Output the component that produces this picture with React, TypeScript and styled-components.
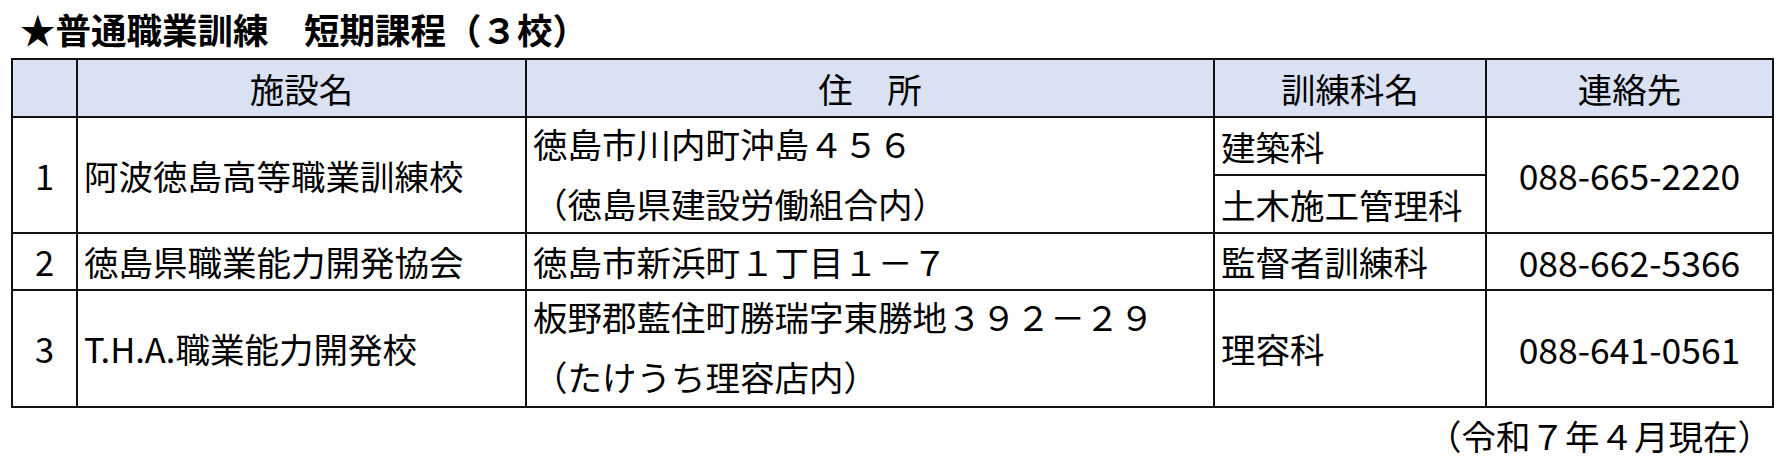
import React from "react";
import styled, { createGlobalStyle } from "styled-components";

const Global = createGlobalStyle`
  html, body { margin: 0; padding: 0; background: #ffffff; }
  body { font-family: "Noto Sans CJK JP", "Noto Sans", sans-serif; color: #000; }
`;

const Page = styled.div`
  width: 1761px;
  padding-left: 11px;
`;

const Title = styled.h1`
  margin: 0;
  height: 58px;
  display: flex;
  align-items: center;
  padding-left: 9px;
  font-size: 35.5px;
  font-weight: 700;
  line-height: 1;
`;

const Table = styled.table`
  width: 1761px;
  border-collapse: collapse;
  table-layout: fixed;
  font-size: 34.5px;
  font-weight: 400;
`;

const HeadRow = styled.tr`
  height: 58px;
  background: #d9e1f2;
`;

const HeadCell = styled.th`
  border: 2px solid #111;
  font-weight: 400;
  text-align: center;
  padding: 0;
  line-height: 1;
`;

const Row = styled.tr<{ $h: number }>`
  height: ${(p) => p.$h}px;
`;

const Cell = styled.td<{ $align?: "left" | "center" }>`
  border: 2px solid #111;
  padding: 0 6px;
  text-align: ${(p) => p.$align ?? "left"};
  vertical-align: middle;
  line-height: 1;
  white-space: nowrap;
`;

const Lines = styled.div`
  display: flex;
  flex-direction: column;
  margin: -5px 0 -1px;
`;

const Line = styled.div`
  height: 60px;
  display: flex;
  align-items: center;
`;

const Phone = styled.span`
  font-size: 35.5px;
`;

const Footer = styled.div`
  height: 54px;
  display: flex;
  align-items: center;
  justify-content: flex-end;
  padding-right: 0;
  font-size: 34.5px;
  line-height: 1;
`;

export default function App() {
  return (
    <>
      <Global />
      <Page>
        <Title>★普通職業訓練　短期課程（３校）</Title>
        <Table>
          <colgroup>
            <col style={{ width: 65 }} />
            <col style={{ width: 449 }} />
            <col style={{ width: 688 }} />
            <col style={{ width: 272 }} />
            <col style={{ width: 287 }} />
          </colgroup>
          <thead>
            <HeadRow>
              <HeadCell></HeadCell>
              <HeadCell>施設名</HeadCell>
              <HeadCell>住　所</HeadCell>
              <HeadCell>訓練科名</HeadCell>
              <HeadCell>連絡先</HeadCell>
            </HeadRow>
          </thead>
          <tbody>
            <Row $h={58}>
              <Cell $align="center" rowSpan={2}>1</Cell>
              <Cell rowSpan={2}>阿波徳島高等職業訓練校</Cell>
              <Cell rowSpan={2}>
                <Lines>
                  <Line>徳島市川内町沖島４５６</Line>
                  <Line>（徳島県建設労働組合内）</Line>
                </Lines>
              </Cell>
              <Cell>建築科</Cell>
              <Cell $align="center" rowSpan={2}>
                <Phone>088-665-2220</Phone>
              </Cell>
            </Row>
            <Row $h={58}>
              <Cell>土木施工管理科</Cell>
            </Row>
            <Row $h={57}>
              <Cell $align="center">2</Cell>
              <Cell>徳島県職業能力開発協会</Cell>
              <Cell>徳島市新浜町１丁目１－７</Cell>
              <Cell>監督者訓練科</Cell>
              <Cell $align="center">
                <Phone>088-662-5366</Phone>
              </Cell>
            </Row>
            <Row $h={117}>
              <Cell $align="center">3</Cell>
              <Cell>T.H.A.職業能力開発校</Cell>
              <Cell>
                <Lines>
                  <Line>板野郡藍住町勝瑞字東勝地３９２－２９</Line>
                  <Line>（たけうち理容店内）</Line>
                </Lines>
              </Cell>
              <Cell>理容科</Cell>
              <Cell $align="center">
                <Phone>088-641-0561</Phone>
              </Cell>
            </Row>
          </tbody>
        </Table>
        <Footer>（令和７年４月現在）</Footer>
      </Page>
    </>
  );
}
